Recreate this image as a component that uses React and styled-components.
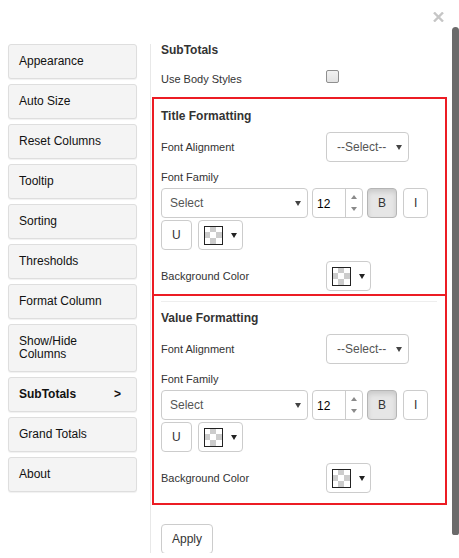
import styled, { createGlobalStyle } from 'styled-components';

const GlobalStyle = createGlobalStyle`
    html, body {
        margin: 0;
        padding: 0;
        background: #ffffff;
    }
    body {
        font-family: "Liberation Sans", Arial, sans-serif;
        color: #333;
    }
`;

const Frame = styled.div`
    display: flex;
    width: 459px;
    height: 558px;
    overflow: hidden;
`;

const Main = styled.div`
    width: 452px;
    display: flex;
    flex-direction: column;
`;

const TopBar = styled.div`
    height: 44px;
    box-sizing: border-box;
    display: flex;
    justify-content: flex-end;
    padding: 12px 8px 0 0;
`;

const CloseButton = styled.button`
    width: 11px;
    height: 10px;
    padding: 0;
    border: none;
    background: none;
    display: flex;
`;

const Body = styled.div`
    display: flex;
    align-items: flex-start;
`;

const Sidebar = styled.nav`
    width: 129px;
    margin-left: 8px;
    display: flex;
    flex-direction: column;
    gap: 5px;
`;

const NavItem = styled.div`
    display: flex;
    justify-content: space-between;
    padding: 10px 15px 10px 10px;
    border: 1px solid #dedede;
    border-radius: 3px;
    background: #f4f4f4;
    box-shadow: 0 1px 1px rgba(0, 0, 0, 0.06);
    font-size: 12px;
    line-height: 13px;
    color: #111;
    font-weight: ${(p) => (p.$active ? 700 : 400)};
`;

const Panel = styled.section`
    width: 302px;
    height: 509px;
    box-sizing: border-box;
    margin-left: 13px;
    border-left: 1px solid #e8e8e8;
    overflow: hidden;
`;

const PanelTitle = styled.h3`
    margin: 0;
    padding-left: 10px;
    font-size: 12px;
    line-height: 12px;
    font-weight: 700;
    color: #333;
`;

const FieldRow = styled.div`
    display: flex;
    align-items: ${(p) => (p.$top ? 'flex-start' : 'center')};
    margin-top: ${(p) => p.$mt || 0}px;
    padding-left: ${(p) => p.$pl || 0}px;
`;

const Label = styled.span`
    width: 165px;
    flex-shrink: 0;
    margin-top: ${(p) => p.$mt || 0}px;
    font-size: 11px;
    line-height: 13px;
    color: #333;
`;

const Checkbox = styled.input.attrs({ type: 'checkbox' })`
    appearance: none;
    margin: 0;
    width: 13px;
    height: 13px;
    border: 1px solid #8f8f8f;
    border-radius: 2px;
    background: linear-gradient(#f2f2f2, #e2e2e2);
`;

const Section = styled.div`
    margin: ${(p) => p.$mt}px 5px 0 1px;
    padding: ${(p) => p.$pt}px 8px ${(p) => p.$pb}px 7px;
    border: 2px solid #ec1c24;
`;

const Divider = styled.hr`
    margin: 0;
    border: none;
    border-top: 1px solid #eeeeee;
`;

const SectionTitle = styled.h4`
    margin: ${(p) => p.$mt || 0}px 0 0;
    font-size: 12px;
    line-height: 14px;
    font-weight: 700;
    color: #333;
`;

const BlockLabel = styled.div`
    margin-top: 9px;
    font-size: 11px;
    line-height: 13px;
    color: #333;
`;

const Controls = styled.div`
    display: flex;
    flex-wrap: wrap;
    row-gap: 2px;
    margin-top: 4px;
`;

const SelectBox = styled.div`
    width: ${(p) => p.$w}px;
    height: 30px;
    box-sizing: border-box;
    display: flex;
    align-items: center;
    justify-content: space-between;
    padding: 0 6px 0 ${(p) => p.$pl}px;
    border: 1px solid #cccccc;
    border-radius: 4px;
    background: #fff;
    font-size: 12px;
    color: #555;
`;

const Caret = styled.span`
    width: 0;
    height: 0;
    border-left: 3px solid transparent;
    border-right: 3px solid transparent;
    border-top: 5px solid ${(p) => p.$color || '#444'};
    margin-left: ${(p) => p.$ml || 0}px;
`;

const NumberBox = styled.div`
    width: 51px;
    height: 30px;
    box-sizing: border-box;
    margin-left: 4px;
    display: flex;
    border: 1px solid #cccccc;
    border-radius: 4px;
    font-size: 12px;
    color: #000;
`;

const NumberValue = styled.span`
    flex: 1;
    display: flex;
    align-items: center;
    padding: 2px 0 0 4px;
`;

const Spinner = styled.span`
    width: 16px;
    border-left: 1px solid #cccccc;
    display: flex;
    flex-direction: column;
    align-items: center;
    justify-content: center;
    gap: 8px;
`;

const SpinArrow = styled.span`
    width: 0;
    height: 0;
    border-left: 3px solid transparent;
    border-right: 3px solid transparent;
    ${(p) => (p.$up ? 'border-bottom' : 'border-top')}: 4px solid #8a8a8a;
`;

const ToggleButton = styled.button`
    height: 30px;
    box-sizing: border-box;
    margin: 0 0 0 ${(p) => p.$ml || 0}px;
    padding: 0 10px;
    border: 1px solid ${(p) => (p.$pressed ? '#b5b5b5' : '#cccccc')};
    border-radius: 4px;
    background: ${(p) => (p.$pressed ? '#e6e6e6' : '#ffffff')};
    box-shadow: ${(p) =>
        p.$pressed ? 'inset 0 3px 5px rgba(0, 0, 0, 0.125)' : 'none'};
    font-family: "Liberation Sans", Arial, sans-serif;
    font-size: 12px;
    color: #333;
`;

const ColorPicker = styled.div`
    width: 45px;
    height: 30px;
    box-sizing: border-box;
    margin-left: ${(p) => p.$ml || 0}px;
    display: flex;
    align-items: center;
    padding-left: 5px;
    border: 1px solid #cccccc;
    border-radius: 4px;
    background: #fff;
`;

const Swatch = styled.span`
    width: 19px;
    height: 19px;
    box-sizing: border-box;
    border: 1px solid #222;
    background-color: #fff;
    background-image: repeating-conic-gradient(#cccccc 0 25%, #ffffff 0 50%);
    background-size: 12px 12px;
    background-position: -1px -1px;
`;

const ApplyButton = styled.button`
    margin: 19px 0 0 10px;
    height: 30px;
    padding: 0 10px;
    border: 1px solid #cccccc;
    border-radius: 4px;
    background: #fff;
    font-family: "Liberation Sans", Arial, sans-serif;
    font-size: 12px;
    color: #333;
`;

const ScrollTrack = styled.div`
    width: 7px;
    background: #ffffff;
`;

const ScrollThumb = styled.div`
    margin-top: 27px;
    height: 508px;
    background: #6b6b6b;
    border-radius: 4px 4px 3px 3px;
`;

const navItems = [
    'Appearance',
    'Auto Size',
    'Reset Columns',
    'Tooltip',
    'Sorting',
    'Thresholds',
    'Format Column',
    'Show/Hide Columns',
    'SubTotals',
    'Grand Totals',
    'About',
];

const ColorSelect = ({ ml }) => (
    <ColorPicker $ml={ml}>
        <Swatch />
        <Caret $color="#222" $ml={8} />
    </ColorPicker>
);

const FormattingBlock = ({ title, first }) => (
    <Section $mt={first ? 11 : -2} $pt={first ? 10 : 5} $pb={first ? 3 : 10}>
        {!first && <Divider />}
        <SectionTitle $mt={first ? 0 : 9}>{title}</SectionTitle>
        <FieldRow $mt={9}>
            <Label $mt={1}>Font Alignment</Label>
            <SelectBox $w={83} $pl={10}>
                --Select--
                <Caret />
            </SelectBox>
        </FieldRow>
        <BlockLabel>Font Family</BlockLabel>
        <Controls>
            <SelectBox $w={147} $pl={8}>
                Select
                <Caret />
            </SelectBox>
            <NumberBox>
                <NumberValue>12</NumberValue>
                <Spinner>
                    <SpinArrow $up />
                    <SpinArrow />
                </Spinner>
            </NumberBox>
            <ToggleButton $pressed $ml={4}>
                B
            </ToggleButton>
            <ToggleButton $ml={6}>I</ToggleButton>
            <ToggleButton>U</ToggleButton>
            <ColorSelect ml={6} />
        </Controls>
        <FieldRow $mt={11}>
            <Label>Background Color</Label>
            <ColorSelect />
        </FieldRow>
    </Section>
);

const App = () => {
    return (
        <>
            <GlobalStyle />
            <Frame>
                <Main>
                    <TopBar>
                        <CloseButton aria-label="Close">
                            <svg width="11" height="10" viewBox="0 0 11 10">
                                <path
                                    d="M1 0.5 L10 9.5 M10 0.5 L1 9.5"
                                    stroke="#c6c6c6"
                                    strokeWidth="2.4"
                                />
                            </svg>
                        </CloseButton>
                    </TopBar>
                    <Body>
                        <Sidebar>
                            {navItems.map((item) => (
                                <NavItem key={item} $active={item === 'SubTotals'}>
                                    <span>{item}</span>
                                    {item === 'SubTotals' && <span>&gt;</span>}
                                </NavItem>
                            ))}
                        </Sidebar>
                        <Panel>
                            <PanelTitle>SubTotals</PanelTitle>
                            <FieldRow $top $mt={14} $pl={10}>
                                <Label $mt={3}>Use Body Styles</Label>
                                <Checkbox />
                            </FieldRow>
                            <FormattingBlock title="Title Formatting" first />
                            <FormattingBlock title="Value Formatting" />
                            <ApplyButton>Apply</ApplyButton>
                        </Panel>
                    </Body>
                </Main>
                <ScrollTrack>
                    <ScrollThumb />
                </ScrollTrack>
            </Frame>
        </>
    );
};

export default App;
